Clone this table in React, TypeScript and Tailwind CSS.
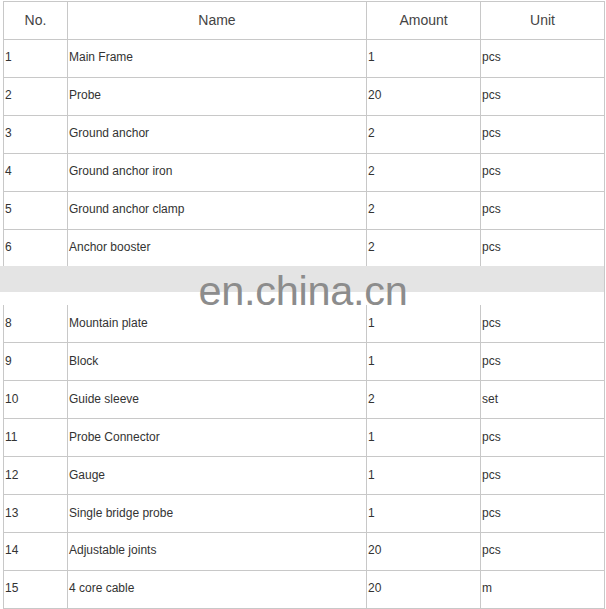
import React from "react"

const rows: [string, string, string, string][] = [
  ["1", "Main Frame", "1", "pcs"],
  ["2", "Probe", "20", "pcs"],
  ["3", "Ground anchor", "2", "pcs"],
  ["4", "Ground anchor iron", "2", "pcs"],
  ["5", "Ground anchor clamp", "2", "pcs"],
  ["6", "Anchor booster", "2", "pcs"],
  ["7", "", "", ""],
  ["8", "Mountain plate", "1", "pcs"],
  ["9", "Block", "1", "pcs"],
  ["10", "Guide sleeve", "2", "set"],
  ["11", "Probe Connector", "1", "pcs"],
  ["12", "Gauge", "1", "pcs"],
  ["13", "Single bridge probe", "1", "pcs"],
  ["14", "Adjustable joints", "20", "pcs"],
  ["15", "4 core cable", "20", "m"],
]

export default function App() {
  return (
    <div className="relative bg-white w-[606px] h-[609px] pt-px pl-[3px] font-['Liberation_Sans',Arial,sans-serif] text-[#333]">
      <table className="border-collapse table-fixed w-[601px]">
        <colgroup>
          <col className="w-[64px]" />
          <col className="w-[299px]" />
          <col className="w-[114px]" />
          <col className="w-[124px]" />
        </colgroup>
        <thead>
          <tr className="h-[38px]">
            {["No.", "Name", "Amount", "Unit"].map((h) => (
              <th key={h} className="border border-[#c8c8c8] text-center font-normal text-[14px] text-[#444] p-0">
                {h}
              </th>
            ))}
          </tr>
        </thead>
        <tbody>
          {rows.map((r) => (
            <tr key={r[0]} className="h-[37.93px]">
              {r.map((c, i) => (
                <td key={i} className="border border-[#c8c8c8] text-[12px] pl-px pr-0 pt-0 pb-[2px] align-middle">
                  {c}
                </td>
              ))}
            </tr>
          ))}
        </tbody>
      </table>

      {/* watermark strip over row 7 */}
      <div className="absolute left-0 top-[266px] w-[604px] h-[39px] bg-white">
        <div className="h-[26px] bg-[#e4e4e4]" />
        <div className="absolute inset-0 flex justify-center items-end pl-[2px]">
          <span className="text-[41.5px] leading-none text-[#8c8c8c] tracking-[-0.3px] translate-y-[6px]">en.china.cn</span>
        </div>
      </div>
    </div>
  )
}
